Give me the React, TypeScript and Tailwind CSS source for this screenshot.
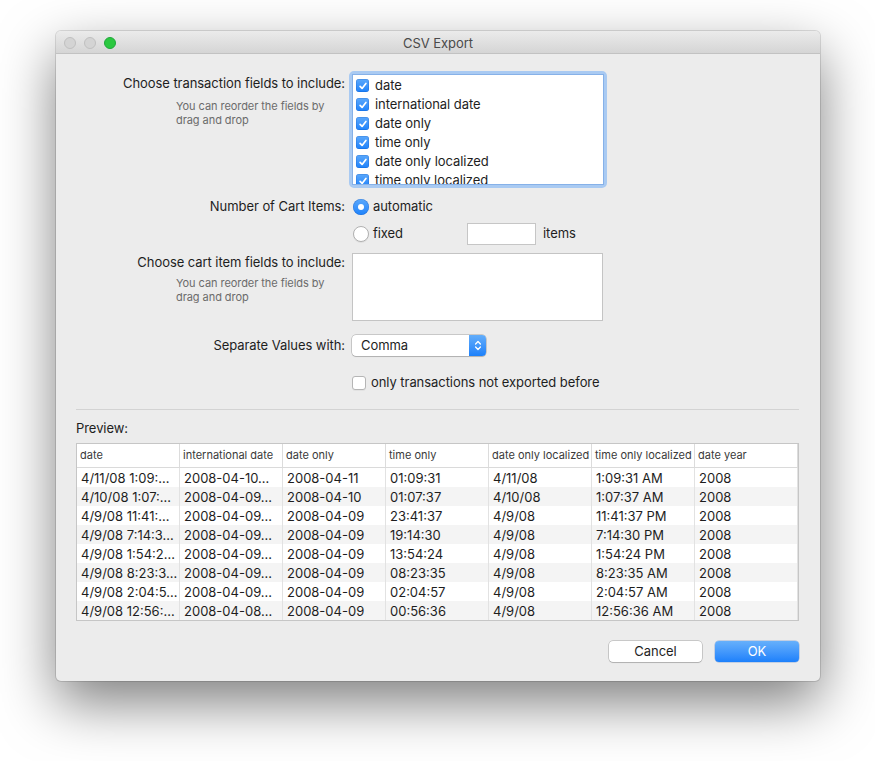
import React from "react";

function Check({ checked, size = 14 }: { checked: boolean; size?: number }) {
  if (checked) {
    return (
      <span
        className="flex shrink-0 items-center justify-center rounded-[3px] bg-linear-to-b from-[#5aa8fb] to-[#1b82fb] shadow-[inset_0_0_0_0.5px_rgba(0,60,160,0.35)]"
        style={{ width: size, height: size }}
      >
        <svg width="10" height="10" viewBox="0 0 10 10">
          <path d="M2.1 5.3 L4.1 7.4 L7.9 2.5" fill="none" stroke="white" strokeWidth="1.7" strokeLinecap="round" strokeLinejoin="round" />
        </svg>
      </span>
    );
  }
  return (
    <span
      className="shrink-0 rounded-[3px] border border-[#b5b5b5] bg-white shadow-[0_1px_0_rgba(0,0,0,0.04)]"
      style={{ width: size, height: size }}
    />
  );
}

function Radio({ on }: { on: boolean }) {
  if (on) {
    return (
      <span className="flex h-[16px] w-[16px] shrink-0 items-center justify-center rounded-full bg-linear-to-b from-[#5aa8fb] to-[#1b82fb] shadow-[inset_0_0_0_0.5px_rgba(0,60,160,0.35)]">
        <span className="h-[6px] w-[6px] rounded-full bg-white" />
      </span>
    );
  }
  return <span className="h-[16px] w-[16px] shrink-0 rounded-full border border-[#b0b0b0] bg-white shadow-[0_1px_0_rgba(0,0,0,0.05)]" />;
}

const fields = ["date", "international date", "date only", "time only", "date only localized", "time only localized"];

const headers = ["date", "international date", "date only", "time only", "date only localized", "time only localized", "date year"];

const rows: string[][] = [
  ["4/11/08 1:09:…", "2008-04-10…", "2008-04-11", "01:09:31", "4/11/08", "1:09:31 AM", "2008"],
  ["4/10/08 1:07:…", "2008-04-09…", "2008-04-10", "01:07:37", "4/10/08", "1:07:37 AM", "2008"],
  ["4/9/08 11:41:…", "2008-04-09…", "2008-04-09", "23:41:37", "4/9/08", "11:41:37 PM", "2008"],
  ["4/9/08 7:14:3…", "2008-04-09…", "2008-04-09", "19:14:30", "4/9/08", "7:14:30 PM", "2008"],
  ["4/9/08 1:54:2…", "2008-04-09…", "2008-04-09", "13:54:24", "4/9/08", "1:54:24 PM", "2008"],
  ["4/9/08 8:23:3…", "2008-04-09…", "2008-04-09", "08:23:35", "4/9/08", "8:23:35 AM", "2008"],
  ["4/9/08 2:04:5…", "2008-04-09…", "2008-04-09", "02:04:57", "4/9/08", "2:04:57 AM", "2008"],
  ["4/9/08 12:56:…", "2008-04-08…", "2008-04-09", "00:56:36", "4/9/08", "12:56:36 AM", "2008"],
];

export default function App() {
  return (
    <div className="relative h-[761px] w-[875px] overflow-hidden bg-white font-[family-name:Inter,Liberation_Sans,sans-serif] text-[13px] tracking-[-0.06px] text-[#1e1e1e]">
      <div className="absolute left-[56px] top-[31px] flex h-[650px] w-[764px] flex-col overflow-hidden rounded-[5px] bg-[#ececec] shadow-[0_22px_55px_rgba(0,0,0,0.5),0_0_0_1px_rgba(0,0,0,0.12)]">
        {/* Title bar */}
        <div className="grid h-[23px] shrink-0 grid-cols-[1fr_auto_1fr] items-center border-b border-[#c2c2c2] bg-linear-to-b from-[#ebebeb] to-[#d5d5d5]">
          <div className="flex gap-[8px] pl-[8px] pt-[1px]">
            <span className="h-[12px] w-[12px] rounded-full border border-[#c0c0c0] bg-[#d4d4d4]" />
            <span className="h-[12px] w-[12px] rounded-full border border-[#c0c0c0] bg-[#d4d4d4]" />
            <span className="h-[12px] w-[12px] rounded-full border border-[#1fa83a] bg-[#2bc840]" />
          </div>
          <div className="pt-[2px] text-[13px] leading-[16px] text-[#4a4a4a]">CSV Export</div>
          <div />
        </div>

        {/* Content */}
        <div className="flex flex-col pl-[20px] pr-[21px]">
          {/* Row 1 */}
          <div className="mt-[17px] flex">
            <div className="w-[269px] shrink-0">
              <div className="pt-[4px] text-right leading-[16px]">Choose transaction fields to include:</div>
              <div className="mt-[8px] pl-[100px] text-[11px] leading-[14px] text-[#6b6b6b]">
                You can reorder the fields by
                <br />
                drag and drop
              </div>
            </div>
            <div className="ml-[4px] h-[117px] w-[258px] rounded-[5px] border-[3px] border-[#a9caf2]">
              <div className="h-full w-full overflow-hidden border border-[#86b1e8] bg-white pl-[3px] pt-[1px]">
                {fields.map((f) => (
                  <div key={f} className="flex h-[19px] items-center gap-[6px]">
                    <Check checked size={13} />
                    <span className="leading-[19px]">{f}</span>
                  </div>
                ))}
              </div>
            </div>
          </div>

          {/* Row 2 */}
          <div className="mt-[8px] flex">
            <div className="flex h-[22px] w-[269px] shrink-0 items-center justify-end">Number of Cart Items:</div>
            <div className="ml-[7px] flex flex-col gap-[5px]">
              <div className="flex h-[22px] items-center gap-[4px] pl-[1px]">
                <Radio on />
                <span>automatic</span>
              </div>
              <div className="flex h-[22px] items-center">
                <div className="flex w-[115px] items-center gap-[4px] pl-[1px]">
                  <Radio on={false} />
                  <span>fixed</span>
                </div>
                <div className="h-[22px] w-[69px] border border-[#c6c6c6] bg-white" />
                <span className="ml-[7px]">items</span>
              </div>
            </div>
          </div>

          {/* Row 3 */}
          <div className="mt-[8px] flex">
            <div className="w-[269px] shrink-0">
              <div className="pt-[1px] text-right leading-[16px]">Choose cart item fields to include:</div>
              <div className="mt-[6px] pl-[100px] text-[11px] leading-[14px] text-[#6b6b6b]">
                You can reorder the fields by
                <br />
                drag and drop
              </div>
            </div>
            <div className="ml-[7px] h-[68px] w-[251px] border border-[#c4c4c4] bg-white" />
          </div>

          {/* Row 4 */}
          <div className="mt-[14px] flex items-center">
            <div className="w-[269px] shrink-0 text-right">Separate Values with:</div>
            <div className="ml-[7px] flex h-[21px] w-[134px] overflow-hidden rounded-[4px] bg-white shadow-[0_0_0_0.5px_rgba(0,0,0,0.3),0_1px_1px_rgba(0,0,0,0.12)]">
              <span className="flex-1 pl-[9px] leading-[21px]">Comma</span>
              <span className="flex w-[17px] items-center justify-center bg-linear-to-b from-[#62adfa] to-[#1a80fa]">
                <svg width="8" height="13" viewBox="0 0 8 13">
                  <path d="M1.6 5 L4 2.5 L6.4 5" fill="none" stroke="white" strokeWidth="1.3" strokeLinecap="round" strokeLinejoin="round" />
                  <path d="M1.6 8 L4 10.5 L6.4 8" fill="none" stroke="white" strokeWidth="1.3" strokeLinecap="round" strokeLinejoin="round" />
                </svg>
              </span>
            </div>
          </div>

          {/* Row 5 */}
          <div className="mt-[19px] flex h-[16px] items-center">
            <div className="w-[269px] shrink-0" />
            <div className="ml-[7px] flex items-center gap-[5px]">
              <Check checked={false} />
              <span>only transactions not exported before</span>
            </div>
          </div>

          {/* Separator */}
          <div className="mt-[18px] h-px bg-[#d3d3d3]" />

          <div className="mt-[10px] leading-[16px]">Preview:</div>

          {/* Table */}
          <div className="mt-[7px] border border-[#c6c6c6] bg-white tracking-normal">
            <div className="flex h-[24px] border-b border-[#dadada]">
              {headers.map((h) => (
                <div key={h} className="w-[103px] shrink-0 overflow-hidden whitespace-nowrap border-r border-[#dcdcdc] pl-[3px] pt-[4px] text-[11px] leading-[14px] text-[#3a3a3a]">
                  {h}
                </div>
              ))}
            </div>
            {rows.map((r, i) => (
              <div key={i} className={`flex h-[19px] ${i % 2 === 1 ? "bg-[#f4f4f4]" : "bg-white"}`}>
                {r.map((c, j) => (
                  <div key={j} className="w-[103px] shrink-0 overflow-hidden whitespace-nowrap border-r border-[#e2e2e2] pl-[4px] pt-[1px] leading-[18px]">
                    {c}
                  </div>
                ))}
              </div>
            ))}
          </div>

          {/* Buttons */}
          <div className="mt-[20px] flex justify-end gap-[13px]">
            <button className="h-[21px] w-[93px] rounded-[4px] bg-white text-[13px] text-[#1e1e1e] shadow-[0_0_0_0.5px_rgba(0,0,0,0.3),0_1px_1px_rgba(0,0,0,0.12)]">
              Cancel
            </button>
            <button className="h-[21px] w-[84px] rounded-[4px] bg-linear-to-b from-[#66b0fb] to-[#1b80fb] text-[13px] text-white shadow-[0_0_0_0.5px_rgba(0,70,180,0.35)]">
              OK
            </button>
          </div>
        </div>
      </div>
    </div>
  );
}
